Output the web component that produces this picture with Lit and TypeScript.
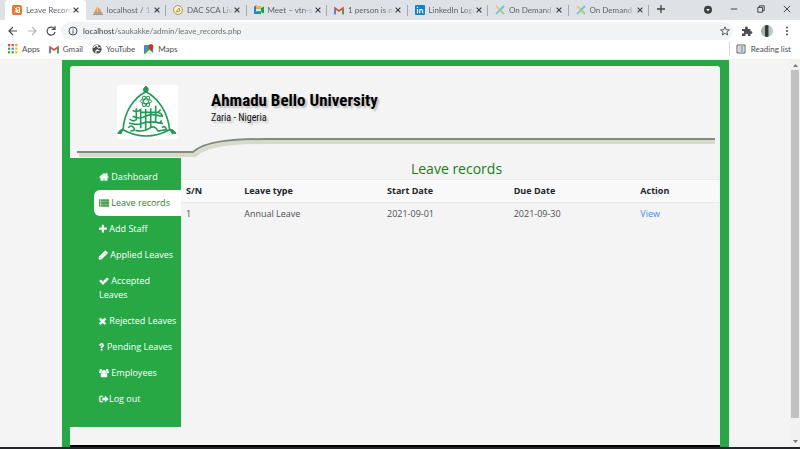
import { LitElement, html, css, svg } from "lit";
import { customElement } from "lit/decorators.js";

const fa = (body: unknown, w = 1792) => html`<svg class="fa" viewBox="0 0 ${w} 1792" style="width:${w / 179.2}px" aria-hidden="true">${body}</svg>`;

const navIcons: Record<string, unknown> = {
  home: fa(svg`<path d="M1472 992v480q0 26-19 45t-45 19h-384v-384h-256v384h-384q-26 0-45-19t-19-45v-480q0-1 .5-3t.5-3l575-474 575 474q1 2 1 6zm223-69l-62 74q-8 9-21 11h-3q-13 0-21-7l-692-577-692 577q-12 8-24 7-13-2-21-11l-62-74q-8-10-7-23.5t11-21.5l719-599q32-26 76-26t76 26l244 204v-195q0-14 9-23t23-9h192q14 0 23 9t9 23v408l219 182q10 8 11 21.5t-7 23.5z" stroke="currentColor" stroke-width="110"/>`),
  list: fa(svg`<path d="M0 256h256v224H0zM384 256h1408v224H384zM0 608h256v224H0zM384 608h1408v224H384zM0 960h256v224H0zM384 960h1408v224H384zM0 1312h256v224H0zM384 1312h1408v224H384z" stroke="currentColor" stroke-width="30"/>`),
  plus: fa(svg`<path transform="translate(-190 0)" d="M1600 736v192q0 40-28 68t-68 28h-416v416q0 40-28 68t-68 28h-192q-40 0-68-28t-28-68v-416h-416q-40 0-68-28t-28-68v-192q0-40 28-68t68-28h416v-416q0-40 28-68t68-28h192q40 0 68 28t28 68v416h416q40 0 68 28t28 68z"/>`, 1434),
  pencil: fa(svg`<path transform="translate(-128 0)" d="M491 1536l91-91-235-235-91 91v107h128v128h107zm523-928q0-22-22-22-10 0-17 7l-542 542q-7 7-7 17 0 22 22 22 10 0 17-7l542-542q7-7 7-17zm-54-192l416 416-832 832h-416v-416zm683 96q0 53-37 90l-166 166-416-416 166-165q36-38 90-38 53 0 91 38l235 234q37 39 37 91z" stroke="currentColor" stroke-width="110"/>`, 1613),
  check: fa(svg`<path d="M1671 566q0 40-28 68l-724 724-136 136q-28 28-68 28t-68-28l-136-136-362-362q-28-28-28-68t28-68l136-136q28-28 68-28t68 28l294 295 656-657q28-28 68-28t68 28l136 136q28 28 28 68z" stroke="currentColor" stroke-width="110"/>`),
  times: fa(svg`<path transform="translate(-250 0)" d="M1490 1322q0 40-28 68l-136 136q-28 28-68 28t-68-28l-294-294-294 294q-28 28-68 28t-68-28l-136-136q-28-28-28-68t28-68l294-294-294-294q-28-28-28-68t28-68l136-136q28-28 68-28t68 28l294 294 294-294q28-28 68-28t68 28l136 136q28 28 28 68t-28 68l-294 294 294 294q28 28 28 68z" stroke="currentColor" stroke-width="60"/>`, 1434),
  question: fa(svg`<path d="M330 1240h270v270H330zM30 560Q180 236 470 236q390 0 390 350 0 190-150 290-110 70-110 150v60H330v-90q0-150 150-240 90-60 90-150 0-100-110-100-100 0-190 170z" stroke="currentColor" stroke-width="60"/>`, 1000),
  users: fa(svg`<circle cx="896" cy="700" r="360"/><circle cx="330" cy="430" r="240"/><circle cx="1462" cy="430" r="240"/><path d="M0 680q0-100 100-100 170 130 370 60-20 180 80 290H130Q0 930 0 820zM1792 680q0-100-100-100-170 130-370 60 20 180-80 290h420q130 0 130-110zM290 1380q0-430 270-430 336 210 672 0 270 0 270 430 0 280-240 280H530q-240 0-240-280z"/>`),
  logout: fa(svg`<path d="M660 1320v160H340Q60 1480 60 1200V600Q60 320 340 320h320v170H370q-130 0-130 130v560q0 140 130 140zM1700 900l-620 570v-330H600V660h480V330z" stroke="currentColor" stroke-width="40"/>`),
};

const nav: [string, string][] = [
  ["home", "Dashboard"], ["list", "Leave records"], ["plus", "Add Staff"], ["pencil", "Applied Leaves"],
  ["check", "Accepted Leaves"], ["times", "Rejected Leaves"], ["question", "Pending Leaves"],
  ["users", "Employees"], ["logout", "Log out"],
];

const gmail = svg`<path d="M1 9V3l4 3 4-3v6" fill="none" stroke="#e04a3f" stroke-width="1.6"/><path d="M1 9.500V4" stroke="#4285f4" stroke-width="1.600"/><path d="M9 9.500V4" stroke="#34a853" stroke-width="1.600"/>`;
const demand = svg`<g opacity=".8"><path d="M1 1l4 4" stroke="#e7c65a" stroke-width="2"/><path d="M9 1L5 5" stroke="#53b9d8" stroke-width="2"/><path d="M5 5L1 9" stroke="#6fc0cf" stroke-width="2"/><path d="M5 5l4 4" stroke="#9acb6b" stroke-width="2"/></g>`;
const tabs: [string, unknown][] = [
  ["Leave Record", svg`<rect width="10" height="10" rx="2" fill="#e8742c"/><path d="M2.500 2.500l2 2.500-2 2.500M4.500 2.500v5M5.500 2.500h2v2.500h-2v2.500h2V5" fill="none" stroke="#fff"/>`],
  ["localhost / 12", svg`<path d="M1 8Q2 5 4.500 1V8zM5 8V2q3 2 3.500 6z" fill="#f0a04b"/><path d="M0 9.300h10M1 8h8" stroke="#8a7f9c"/>`],
  ["DAC SCA Live", svg`<circle cx="5" cy="5" r="4.400" fill="#f7f2dc" stroke="#b59a3c"/><path d="M3 7l3-4 1 3z" fill="none" stroke="#b59a3c"/>`],
  ["Meet – vtn-sc", svg`<path d="M0 1.500h7v2H2v3H0z" fill="#2a7de1"/><path d="M0 1.500L2.500 0v2z" fill="#ea4335"/><path d="M2 1h5v2.500H2z" fill="#fbbc04"/><path d="M0 3.500h2v3h5v2.500H0z" fill="#2a7de1"/><path d="M3 6.500h4V3l3-1.500v7L7 7v2H3z" fill="#16a34a"/>`],
  ["1 person is no", gmail],
  ["LinkedIn Logi", svg`<rect width="10" height="10" rx="1" fill="#1583bb"/><path d="M2.500 4v4.200M2.500 1.700v1.200M4.800 8.200V4M4.800 6q0-1.500 1.400-1.500T7.600 6v2.200" stroke="#fff" stroke-width="1.200" fill="none"/>`],
  ["On Demand A", demand],
  ["On Demand A", demand],
];

const bookmarks: [string, unknown][] = [
  ["Apps", svg`<g>${["#ea4335", "#ea4335", "#f29b30", "#34a853", "#4285f4", "#fbbc04", "#34a853", "#34a853", "#fbbc04"].map((c, i) => svg`<rect x=${(i % 3) * 3.6} y=${Math.floor(i / 3) * 3.6} width="2.200" height="2.200" fill=${c} />`)}</g>`],
  ["Gmail", gmail],
  ["YouTube", svg`<circle cx="5" cy="5" r="4.600" fill="#4a4d51"/><path d="M1.500 4q2-3 4-2.500-.5 2 1 2.500l2-.5M4 9q-.5-2.500 1-3l2.500 1" stroke="#fff" stroke-width="1.200" fill="none"/>`],
  ["Maps", svg`<rect y="1" width="9" height="9" rx="1" fill="#34a853"/><path d="M0 2h5L1 7H0z" fill="#4285f4"/><path d="M1 10l4.500-4.500L9 9v1z" fill="#e8eaed"/><path d="M7 7Q4.500 4 4.500 2.500a2.500 2.500 0 015 0Q9.500 4 7 7z" fill="#d93025"/>`],
];

const ic = (body: unknown) => html`<svg class="ic" viewBox="0 0 10 10" aria-hidden="true">${body}</svg>`;
const line = (d: string, w = 1.2) => ic(svg`<path d=${d} fill="none" stroke="currentColor" stroke-width=${w} />`);

@customElement("app-root")
export class AppRoot extends LitElement {
  static styles = css`
    :host { display: flex; flex-direction: column; height: 100vh; overflow: hidden; background: #fff; font-family: "Open Sans", "Noto Sans", sans-serif; font-size: 9px; line-height: 14px; color: #4a4d51; }
    * { box-sizing: border-box; }
    button { font: inherit; color: inherit; background: none; border: 0; padding: 0; display: flex; align-items: center; justify-content: center; }
    a { text-decoration: none; color: inherit; }
    .ic { width: 10px; height: 10px; flex: none; display: block; overflow: visible; }
    .strip, .bar, .marks { font-family: Lato, "Open Sans", sans-serif; font-size: 8px; }
    .strip { display: flex; height: 20px; background: #dee1e6; padding-left: 5px; flex: none; }
    .tabs { display: flex; flex: 1; min-width: 0; }
    .tab { flex: 1; min-width: 0; display: flex; align-items: center; padding: 0 4px 0 7px; position: relative; color: #5f6368; }
    .tab::after { content: ""; position: absolute; right: 0; top: 5px; height: 11px; width: 1px; background: #a5a8ad; }
    .tab.on { background: #fff; border-radius: 4px 4px 0 0; }
    .tab.on::after { display: none; }
    .name { flex: 1; min-width: 0; justify-content: flex-start; margin-left: 4px; white-space: nowrap; mask-image: linear-gradient(90deg, #000 75%, transparent); }
    .close { width: 7px; height: 9px; margin-right: 2px; color: #3c4043; }
    .close .ic { width: 6px; height: 6px; }
    .win { width: 151px; flex: none; display: flex; align-items: center; justify-content: space-between; padding: 0 9px 2px 8px; color: #3c4043; }
    .win .new { margin-right: 20px; }
    .win .ic { width: 8px; height: 8px; }
    .bar { display: flex; align-items: center; height: 21px; flex: none; padding: 0 8px; gap: 9px; }
    .dim { color: #b4b7ba; }
    .pill { flex: 1; min-width: 0; display: flex; align-items: center; height: 18px; border-radius: 9px; background: #f1f3f4; padding: 0 3px 0 7px; gap: 5px; margin-left: -4px; }
    .url { flex: 1; min-width: 0; border: 0; padding: 0; outline: 0; font: inherit; color: transparent; background: linear-gradient(90deg, #303235 32px, #666a6e 32px); background-clip: text; -webkit-background-clip: text; }
    .avatar { width: 12px; height: 12px; border-radius: 50%; background: linear-gradient(90deg, #aab2aa 30%, #343a36 35%, #343a36 60%, #bcc6cc 65%); }
    .marks { display: flex; align-items: center; height: 19px; flex: none; padding: 0 9px 2px 8px; gap: 9px; border-bottom: 1px solid #eef3e8; }
    .mark { display: flex; align-items: center; gap: 4px; }
    .reading { margin-left: auto; border-left: 1px solid #d5d7da; padding-left: 6px; gap: 5px; }
    .view { flex: 1; min-height: 0; display: flex; background: #f4f4f4; }
    .frame { flex: 1; min-width: 0; margin: 0 61px 0 62px; padding: 6px 9px 0 8px; background: #28a745; display: flex; flex-direction: column; }
    .sheet { flex: 1; display: flex; flex-direction: column; background: #f4f4f4; border-radius: 3px 3px 0 0; border-bottom: 2px solid #000; }
    .head { height: 92px; padding: 19px 5px 0 7px; display: grid; grid-template: 51px 22px / 134px 1fr; flex: none; }
    .crest { width: 61px; height: 54px; margin-left: 40px; background: #fff; display: block; }
    .brand { padding-top: 3px; font-family: "Roboto Condensed", "Liberation Sans", sans-serif; color: #111; }
    .brand h1 { margin: 0; font-size: 17px; line-height: 24px; font-weight: 700; white-space: nowrap; text-shadow: 2px 2px 2px #bbb; color: #000; }
    .brand p { margin: 0; font-size: 10px; line-height: 12px; text-shadow: 2px 2px 2px #bbb; }
    .swoosh { grid-column: 1 / 3; width: 100%; height: 22px; display: block; overflow: hidden; }
    .body { flex: 1; display: flex; align-items: flex-start; }
    .side { width: 111px; height: 269px; flex: none; padding: 6px 0 0 24px; background: #28a745; color: #fff; }
    .side a { display: block; padding: 6px 3px 6px 5px; border-radius: 6px 0 0 6px; }
    .side a.on { background: #fff; color: #228b22; }
    .fa { height: 10px; fill: currentColor; vertical-align: -2px; overflow: visible; }
    main { flex: 1; min-width: 0; }
    h2 { margin: 0; font-size: 14px; line-height: 21px; font-weight: 500; color: #158015; text-align: center; padding-left: 12px; }
    table { width: 100%; border-collapse: collapse; table-layout: fixed; color: #4c5055; }
    th, td { text-align: left; padding: 4px 5px; border-top: 1px solid #e8e9ea; }
    th { background: #f9f9f9; color: #212529; font-weight: 700; }
    .c1 { width: 10.8%; } .c2 { width: 26.5%; } .c3, .c4 { width: 23.5%; }
    td a { color: #3b8ee8; }
    .scroll { width: 10px; flex: none; background: #f1f1f1; display: flex; flex-direction: column; align-items: center; justify-content: space-between; padding: 3px 1px; color: #777; }
    .scroll .ic { width: 5px; height: 5px; }
    .thumb { flex: 1; width: 8px; margin: 2px 0 21px; background: #c1c1c1; }
    .task { height: 2px; flex: none; background: #22252a; }
  `;

  render() {
    return html`
      <div class="strip">
        <div class="tabs">${tabs.map(([t, i], n) => html`<div class="tab ${n === 0 ? "on" : ""}">${ic(i)}<button class="name">${t}</button><button class="close" aria-label="Close tab">${line("M1 1l8 8M9 1L1 9", 2)}</button></div>`)}</div>
        <div class="win">
          <button class="new" aria-label="New tab">${line("M5 0v10M0 5h10", 1.6)}</button>
          <button aria-label="Search tabs">${ic(svg`<circle cx="5" cy="6" r="5" fill="currentColor"/><path d="M3 5h4L5 8z" fill="#fff"/>`)}</button>
          <button aria-label="Minimize">${line("M1 5h8")}</button>
          <button aria-label="Restore">${line("M1 3h6v6H1zM3 3V1h6v6H7")}</button>
          <button aria-label="Close">${line("M1 1l8 8M9 1L1 9")}</button>
        </div>
      </div>
      <div class="bar">
        <button aria-label="Back">${line("M9 5H1.500M5 1L1 5l4 4")}</button>
        <button class="dim" aria-label="Forward">${line("M1 5h7.500M5 1l4 4-4 4")}</button>
        <button aria-label="Reload">${line("M8.500 3A4 4 0 109 6M9 0v3.500H5.500")}</button>
        <div class="pill">
          ${ic(svg`<circle cx="5" cy="5" r="4" fill="none" stroke="currentColor"/><path d="M5 4.500v3M5 2.500v1" stroke="currentColor"/>`)}
          <input class="url" aria-label="Address" value="localhost/saukakke/admin/leave_records.php" />
          <button aria-label="Bookmark">${line("M5 .8l1.200 2.900 3.200.2-2.500 2 .8 3.100L5 7.300 2.300 9l.8-3.100-2.500-2 3.200-.2z", 0.9)}</button>
        </div>
        <button aria-label="Extensions">${ic(svg`<path d="M0 3h3V2a1.400 1.400 0 012.800 0v1H8.500v2.200h.6a1.300 1.300 0 010 2.600h-.6V10H6V9a1.300 1.300 0 00-2.600 0v1H0V7.500h1a1.200 1.200 0 000-2.400H0z" fill="currentColor"/>`)}</button>
        <button class="avatar" aria-label="Profile"></button>
        <button aria-label="Menu">${ic(svg`<circle cx="5" cy="1.500" r="1" fill="currentColor"/><circle cx="5" cy="5" r="1" fill="currentColor"/><circle cx="5" cy="8.500" r="1" fill="currentColor"/>`)}</button>
      </div>
      <div class="marks">
        ${bookmarks.map(([t, i]) => html`<a class="mark" href="#">${ic(i)}${t}</a>`)}
        <button class="mark reading">${line("M1 1h8v8H1zM2.500 3h1M4.500 3h3M2.500 5h1M4.500 5h3M2.500 7h1M4.500 7h3", 0.9)}Reading list</button>
      </div>
      <div class="view">
        <div class="frame"><div class="sheet">
          <header class="head">
            <svg class="crest" viewBox="0 0 183 162" fill="none" stroke="#229a55" role="img" aria-label="University crest">
              <path stroke-width="5" d="M87 20C50 38 22 80 18 134Q87 172 158 134C152 80 122 38 87 20z"/>
              <path fill="#229a55" stroke-width="3" d="M81 20l-2-8 8-9 7 9-2 8zM19 132l-7 14-10-1 8-10zM158 132l7 14 12-1-9-10z"/>
              <g stroke-width="3"><ellipse cx="87" cy="49" rx="17" ry="7"/><ellipse cx="87" cy="49" rx="17" ry="7" transform="rotate(60 87 49)"/><ellipse cx="87" cy="49" rx="17" ry="7" transform="rotate(120 87 49)"/></g>
              <path stroke-width="5" d="M47 76q12 8 24-2v56M58 70v34q-10 8-20-2M86 72v62M101 70v60M116 62v50q12 6 18-6M47 94q20 10 38 0t48 0M36 114q24 8 44 0t58 2M71 82h52l8-8M34 128q8-10 16 0t-10 10M55 136q26 6 42-6t26 8l26-4q-6-14-14-6M124 84q12 0 12 12"/>
            </svg>
            <div class="brand"><h1>Ahmadu Bello University</h1><p>Zaria - Nigeria</p></div>
            <svg class="swoosh" aria-hidden="true">
              <path d="M2 19H118C130 8 155 6 190 6H3000" fill="none" stroke="#d6dbc9" stroke-width="4"/>
              <path d="M0 16H116C128 5 155 3 190 3H3000" fill="none" stroke="#868a7e" stroke-width="2"/>
            </svg>
          </header>
          <div class="body">
            <nav class="side">${nav.map(([i, t]) => html`<a href="#" class=${i === "list" ? "on" : ""}>${navIcons[i]}${i === "logout" ? "" : " "}${t}</a>`)}</nav>
            <main>
              <h2>Leave records</h2>
              <table>
                <thead><tr><th class="c1">S/N</th><th class="c2">Leave type</th><th class="c3">Start Date</th><th class="c4">Due Date</th><th>Action</th></tr></thead>
                <tbody><tr><td>1</td><td>Annual Leave</td><td>2021-09-01</td><td>2021-09-30</td><td><a href="#">View</a></td></tr></tbody>
              </table>
            </main>
          </div>
        </div></div>
        <div class="scroll">${ic(svg`<path d="M0 8l5-6 5 6z" fill="currentColor"/>`)}<div class="thumb"></div>${ic(svg`<path d="M0 2l5 6 5-6z" fill="currentColor"/>`)}</div>
      </div>
      <div class="task"></div>`;
  }
}
